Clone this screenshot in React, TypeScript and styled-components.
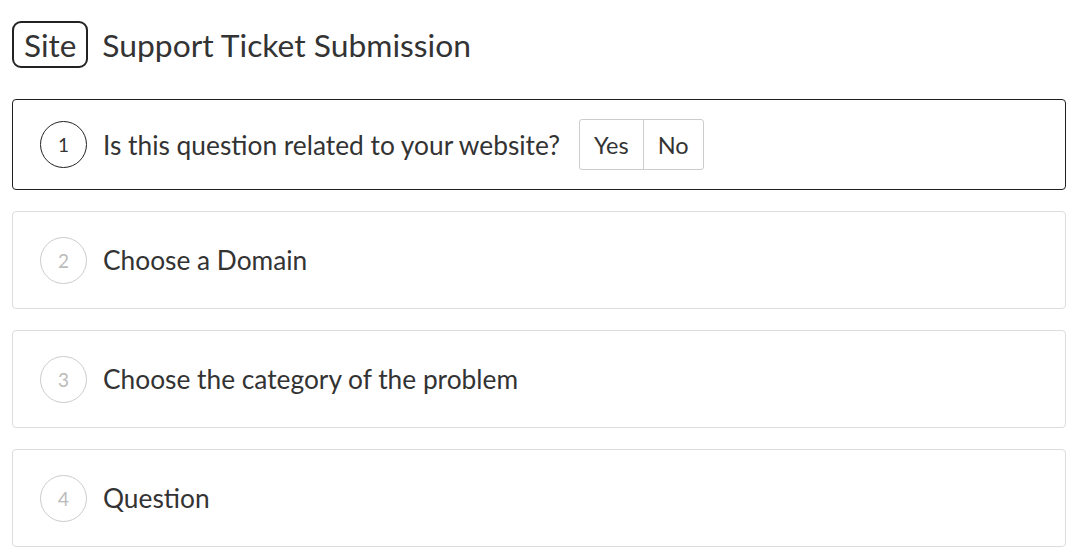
import { FC } from 'react'
import styled, { createGlobalStyle } from 'styled-components'

const GlobalStyle = createGlobalStyle`
  html, body {
    margin: 0;
    padding: 0;
    background: #ffffff;
    font-family: Lato, 'Open Sans', sans-serif;
    color: #333333;
  }
`

type Step = {
  num: number
  title: string
  active?: boolean
}

const steps: Step[] = [
  { num: 1, title: 'Is this question related to your website?', active: true },
  { num: 2, title: 'Choose a Domain' },
  { num: 3, title: 'Choose the category of the problem' },
  { num: 4, title: 'Question' },
]

const StepCard: FC<{ step: Step }> = ({ step }) => (
  <Card $active={step.active}>
    <NumberCircle $active={step.active}>{step.num}</NumberCircle>
    <StepTitle>{step.title}</StepTitle>
    {step.active && (
      <ButtonGroup>
        <ChoiceButton>Yes</ChoiceButton>
        <ChoiceButton>No</ChoiceButton>
      </ButtonGroup>
    )}
  </Card>
)

export default function App() {
  return (
    <>
      <GlobalStyle />
      <Page>
        <Header>
          <SiteBadge>Site</SiteBadge>
          <HeaderTitle>Support Ticket Submission</HeaderTitle>
        </Header>
        <StepList>
          {steps.map((s) => (
            <StepCard key={s.num} step={s} />
          ))}
        </StepList>
      </Page>
    </>
  )
}

const Page = styled.div`
  padding: 21px 14px 0 12px;
`

const Header = styled.div`
  display: flex;
  align-items: center;
  gap: 14px;
  height: 47px;
`

const SiteBadge = styled.div`
  box-sizing: border-box;
  height: 47px;
  padding: 0 10px;
  display: flex;
  align-items: center;
  border: 2px solid #222222;
  border-radius: 9px;
  font-size: 31.5px;
  color: #333333;
`

const HeaderTitle = styled.h1`
  margin: 0;
  font-size: 31.8px;
  font-weight: 400;
  color: #333333;
`

const StepList = styled.div`
  margin-top: 31px;
  display: flex;
  flex-direction: column;
  gap: 21px;
`

const Card = styled.div<{ $active?: boolean }>`
  box-sizing: border-box;
  display: flex;
  align-items: center;
  height: ${({ $active }) => ($active ? '91px' : '98px')};
  padding: 0 27px;
  border: 1px solid ${({ $active }) => ($active ? '#1f1f1f' : '#dddddd')};
  border-radius: 4px;
  background: #ffffff;
`

const NumberCircle = styled.div<{ $active?: boolean }>`
  box-sizing: border-box;
  flex-shrink: 0;
  width: 47px;
  height: 47px;
  border-radius: 50%;
  border: ${({ $active }) => ($active ? '1.5px solid #222222' : '1px solid #cccccc')};
  display: flex;
  align-items: center;
  justify-content: center;
  font-size: 19px;
  color: ${({ $active }) => ($active ? '#333333' : '#bbbbbb')};
`

const StepTitle = styled.div`
  margin-left: 16px;
  font-size: 26.3px;
  color: #333333;
`

const ButtonGroup = styled.div`
  margin-left: 19px;
  display: flex;
  height: 51px;
  border: 1px solid #cccccc;
  border-radius: 3px;
  box-sizing: border-box;
`

const ChoiceButton = styled.div`
  display: flex;
  align-items: center;
  padding: 0 14px;
  font-size: 23.5px;
  color: #333333;

  & + & {
    border-left: 1px solid #cccccc;
  }
`
